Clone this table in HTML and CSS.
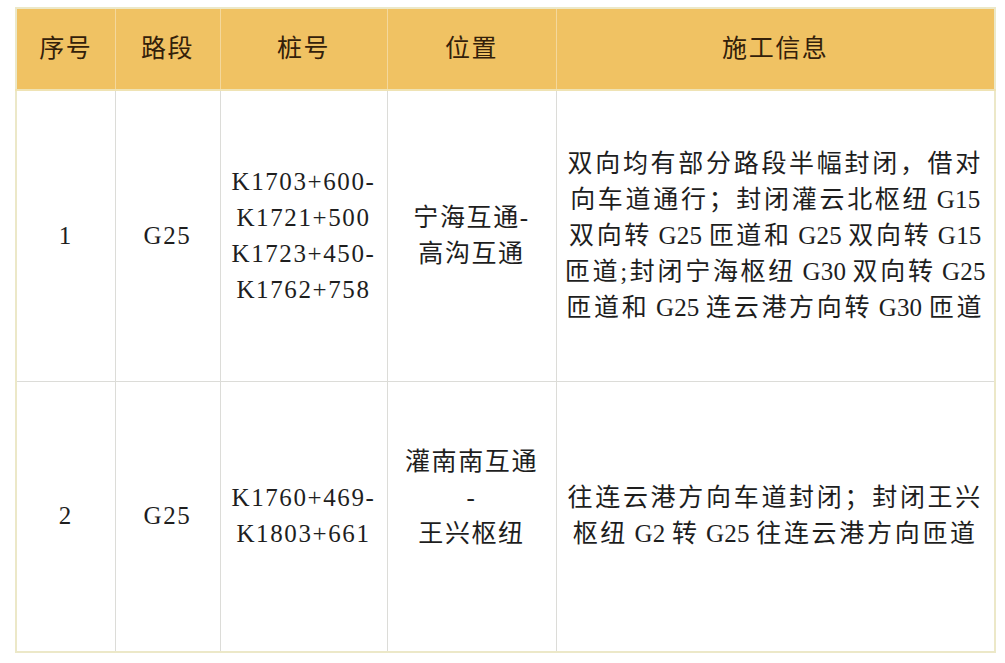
FILE: index.html
```html
<!DOCTYPE html>
<html lang="zh-CN">
<head>
<meta charset="utf-8">
<title>施工信息</title>
<link rel="stylesheet" href="styles.css">
</head>
<body>
<table class="works">
  <colgroup>
    <col class="c-no">
    <col class="c-road">
    <col class="c-stake">
    <col class="c-pos">
    <col class="c-info">
  </colgroup>
  <thead>
    <tr class="head">
      <th>序号</th>
      <th>路段</th>
      <th>桩号</th>
      <th>位置</th>
      <th>施工信息</th>
    </tr>
  </thead>
  <tbody>
    <tr class="row1">
      <td>1</td>
      <td>G25</td>
      <td>K1703+600-<br>K1721+500<br>K1723+450-<br>K1762+758</td>
      <td>宁海互通-<br>高沟互通</td>
      <td class="info">双向均有部分路段半幅封闭，借对<br>向车道通行；封闭灌云北枢纽<span class="lat"> G15</span><br>双向转<span class="lat"> G25 </span>匝道和<span class="lat"> G25 </span>双向转<span class="lat"> G15</span><br>匝道;封闭宁海枢纽<span class="lat"> G30 </span>双向转<span class="lat"> G25</span><br>匝道和<span class="lat"> G25 </span>连云港方向转<span class="lat"> G30 </span>匝道</td>
    </tr>
    <tr class="row2">
      <td>2</td>
      <td>G25</td>
      <td>K1760+469-<br>K1803+661</td>
      <td>灌南南互通<br>-<br>王兴枢纽<br>&nbsp;</td>
      <td class="info">往连云港方向车道封闭；封闭王兴<br>枢纽<span class="lat"> G2 </span>转<span class="lat"> G25 </span>往连云港方向匝道</td>
    </tr>
  </tbody>
</table>
</body>
</html>
```

FILE: styles.css
```css
html, body {
  margin: 0;
  padding: 0;
  background: #ffffff;
}

body {
  padding: 7px 0 0 15px;
  font-family: "Liberation Serif", "Noto Sans CJK SC", serif;
  color: #1e1e1e;
}

.works {
  border-collapse: collapse;
  table-layout: fixed;
  width: 979px;
  border: 2px solid #ece8c8;
}

.c-no { width: 99px; }
.c-road { width: 105px; }
.c-stake { width: 167px; }
.c-pos { width: 169px; }
.c-info { width: 439px; }

.works th,
.works td {
  padding: 0;
  text-align: center;
  vertical-align: middle;
  font-size: 25px;
  font-weight: normal;
  line-height: 36px;
  letter-spacing: 1.6px;
}

.head {
  height: 82px;
  background: #f0c263;
}

.head th {
  color: #33200a;
  border-left: 1px solid #f4d89c;
  border-bottom: 2px solid #efe3b4;
}

.head th:first-child {
  border-left: none;
}

.works td {
  border-left: 1px solid #dcdcd8;
  border-top: 1px solid #dcdcd8;
}

.works td:first-child {
  border-left: none;
}

.row1 { height: 291px; }
.row2 { height: 271px; }

.row1 td { border-top: none; }

.works td.info {
  letter-spacing: 2.7px;
}

.works td.info .lat {
  letter-spacing: 0.2px;
}
```
